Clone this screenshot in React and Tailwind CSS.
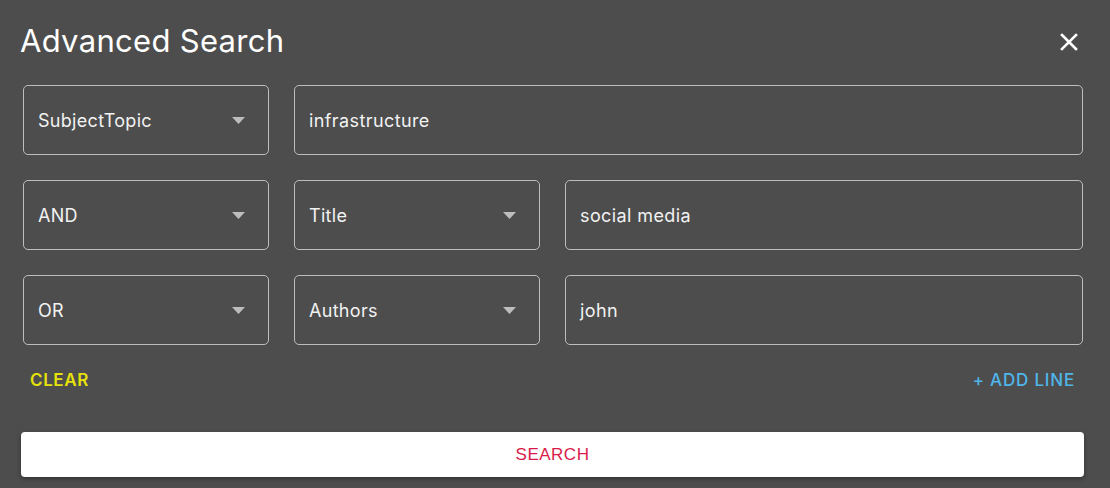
import React, { useState } from "react";

const font = { fontFamily: "Inter, 'Noto Sans', sans-serif" };

const Arrow = () => (
    <svg width="13" height="7" viewBox="0 0 13 7" className="shrink-0">
        <path d="M0 0 L13 0 L6.5 7 Z" fill="#bdbdbd" />
    </svg>
);

const SelectBox = ({ value }) => (
    <div className="flex h-[70px] w-[246px] shrink-0 items-center justify-between rounded-[5px] border border-[#bdbdbd] pl-[14px] pr-[23px]">
        <span className="text-[18px] tracking-[0.3px] text-[#f2f2f2]">{value}</span>
        <Arrow />
    </div>
);

const TextBox = ({ value }) => (
    <div className="flex h-[70px] flex-1 items-center rounded-[5px] border border-[#bdbdbd] px-[14px]">
        <span className="text-[18px] tracking-[0.4px] text-[#f2f2f2]">{value}</span>
    </div>
);

const App = () => {
    const [rows] = useState([
        { op: null, field: "SubjectTopic", value: "infrastructure" },
        { op: "AND", field: "Title", value: "social media" },
        { op: "OR", field: "Authors", value: "john" },
    ]);

    return (
        <div className="h-[488px] w-[1110px] overflow-hidden bg-[#4d4d4d]" style={font}>
            <div className="flex h-[85px] items-center justify-between pl-[20px] pr-[32px] pb-[2px]">
                <h2 className="text-[31px] font-normal tracking-[0.3px] text-white">Advanced Search</h2>
                <svg width="18" height="18" viewBox="0 0 18 18">
                    <path d="M2 2 L16 16 M16 2 L2 16" stroke="#fff" strokeWidth="2.6" strokeLinecap="square" />
                </svg>
            </div>

            <div className="flex flex-col gap-[25px] pl-[23px] pr-[27px]">
                {rows.map((row, i) => (
                    <div key={i} className="flex gap-[25px]">
                        {row.op && <SelectBox value={row.op} />}
                        <SelectBox value={row.field} />
                        <TextBox value={row.value} />
                    </div>
                ))}
            </div>

            <div className="flex h-[70px] items-center justify-between pl-[30px] pr-[35px] pt-[1px]">
                <button className="text-[17px] font-semibold tracking-[0.6px] text-[#e6e10a]">CLEAR</button>
                <button className="text-[17px] font-medium tracking-[0.8px] text-[#4fb6ea]">+ ADD LINE</button>
            </div>

            <div className="pl-[21px] pr-[26px] pt-[17px]">
                <button
                    className="flex h-[45px] w-full items-center justify-center rounded-[4px] bg-white text-[17px] tracking-[0.5px] text-[#d81b4a] shadow-[0_2px_4px_rgba(0,0,0,0.35)]"
                    style={{ fontFamily: "'Liberation Sans', sans-serif" }}
                >
                    SEARCH
                </button>
            </div>
        </div>
    );
};

export default App;
